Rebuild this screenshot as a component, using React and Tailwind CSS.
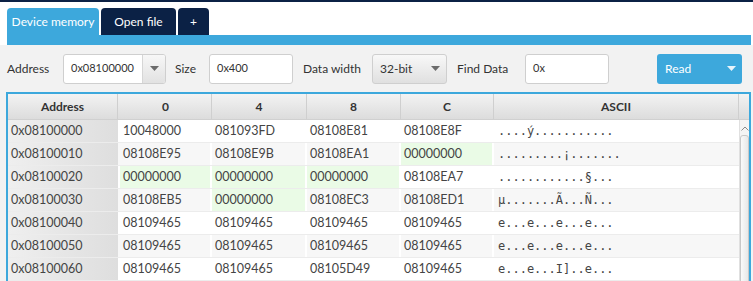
import React from "react";

const rows = [
  { addr: "0x08100000", cells: ["10048000", "081093FD", "08108E81", "08108E8F"], green: [], ascii: "....ý..........." },
  { addr: "0x08100010", cells: ["08108E95", "08108E9B", "08108EA1", "00000000"], green: [3], ascii: ".........¡......." },
  { addr: "0x08100020", cells: ["00000000", "00000000", "00000000", "08108EA7"], green: [0, 1, 2], ascii: "............§..." },
  { addr: "0x08100030", cells: ["08108EB5", "00000000", "08108EC3", "08108ED1"], green: [1], ascii: "µ.......Ã...Ñ..." },
  { addr: "0x08100040", cells: ["08109465", "08109465", "08109465", "08109465"], green: [], ascii: "e...e...e...e..." },
  { addr: "0x08100050", cells: ["08109465", "08109465", "08109465", "08109465"], green: [], ascii: "e...e...e...e..." },
  { addr: "0x08100060", cells: ["08109465", "08109465", "08105D49", "08109465"], green: [], ascii: "e...e...I]..e..." },
];

const Caret = ({ color = "#6b6b6b" }) => (
  <svg width="9" height="5" viewBox="0 0 9 5">
    <path d="M0 0 L9 0 L4.5 5 Z" fill={color} />
  </svg>
);

const headers = ["Address", "0", "4", "8", "C", "ASCII"];
const widths = ["w-[110px]", "w-[92px]", "w-[95px]", "w-[94px]", "w-[93px]", "w-[245px]"];

export default function App() {
  return (
    <div
      className="w-[753px] h-[281px] overflow-hidden bg-[#f2f2f2] text-[#333]"
      style={{ fontFamily: 'Lato, "Open Sans", sans-serif' }}
    >
      <div className="h-[2px] bg-[#0b2145]" />
      {/* tabs */}
      <div className="bg-white pt-[6px] pl-[7px] pr-[2px]">
        <div className="flex gap-[2px] h-[27px] items-stretch">
          <div className="w-[92px] bg-[#3da8dc] rounded-t-[4px] text-white text-[12px] flex items-center justify-center pt-[1px]">
            Device memory
          </div>
          <div className="w-[75px] bg-[#0b2145] rounded-t-[4px] text-white text-[12px] flex items-center justify-center pt-[1px]">
            Open file
          </div>
          <div className="w-[31px] bg-[#0b2145] rounded-t-[4px] text-white text-[12px] flex items-center justify-center pt-[1px]">
            +
          </div>
        </div>
        <div className="h-[10px] bg-[#3da8dc]" />
      </div>
      {/* toolbar */}
      <div className="flex items-center h-[47px] pl-[7px] text-[12px]">
        <span className="w-[56px]">Address</span>
        <div className="flex w-[103px] h-[30px] border border-[#cfcfcf] rounded-[3px] bg-white overflow-hidden">
          <div className="flex-1 flex items-center pl-[7px] text-[11px]">0x08100000</div>
          <div className="w-[23px] border-l border-[#d6d6d6] bg-gradient-to-b from-[#f7f7f7] to-[#e2e2e2] flex items-center justify-center">
            <Caret />
          </div>
        </div>
        <span className="ml-[9px] w-[34px]">Size</span>
        <div className="w-[84px] h-[30px] border border-[#cfcfcf] rounded-[3px] bg-white flex items-center pl-[7px] text-[11px]">
          0x400
        </div>
        <span className="ml-[10px] w-[69px]">Data width</span>
        <div className="w-[75px] h-[30px] border border-[#cfcfcf] rounded-[3px] bg-gradient-to-b from-[#f8f8f8] to-[#e0e0e0] flex items-center justify-between pl-[7px] pr-[6px] text-[12px]">
          <span>32-bit</span>
          <Caret />
        </div>
        <span className="ml-[10px] w-[68px]">Find Data</span>
        <div className="w-[84px] h-[30px] border border-[#cfcfcf] rounded-[3px] bg-white flex items-center pl-[7px] text-[11px]">
          0x
        </div>
        <div className="ml-[48px] w-[85px] h-[30px] rounded-[3px] bg-[#3da8dc] flex items-center justify-between pl-[8px] pr-[6px] text-white text-[12px]">
          <span>Read</span>
          <Caret color="#e8f4fb" />
        </div>
      </div>
      {/* table */}
      <div className="ml-[6px] w-[745px] border-2 border-[#3da8dc] border-b-0 bg-white">
        <div className="flex h-[26px] bg-gradient-to-b from-[#f3f3f3] to-[#dcdcdc] border-b border-[#d0d0d0]">
          {headers.map((h, i) => (
            <div
              key={h}
              className={`${widths[i]} ${i === 0 ? "mr-[2px]" : ""} flex items-center justify-center font-bold text-[12px] border-r border-[#cfcfcf]`}
            >
              {h}
            </div>
          ))}
          <div className="flex-1" />
        </div>
        <div className="flex">
          <div className="flex flex-col">
            {rows.map((r, ri) => (
              <div
                key={r.addr}
                className={`flex h-[23px] border-b border-[#ececec] ${ri % 2 === 1 ? "bg-[#f7f7f7]" : "bg-white"}`}
              >
                <div className="w-[110px] bg-gradient-to-r from-[#efefef] to-[#dedede] flex items-center pl-[3px] text-[12.5px] text-[#444] mr-[2px]">
                  {r.addr}
                </div>
                {r.cells.map((c, ci) => (
                  <div
                    key={ci}
                    className={`${widths[ci + 1]} flex items-center pl-[3px] text-[12.5px] text-[#444] border-r-2 border-white ${r.green.includes(ci) ? "bg-[#eafbe6]" : ""}`}
                  >
                    {c}
                  </div>
                ))}
                <div
                  className="w-[245px] flex items-center pl-[4px] text-[12px] text-[#444]"
                  style={{ fontFamily: '"DejaVu Sans Mono", "Liberation Mono", monospace' }}
                >
                  {r.ascii}
                </div>
              </div>
            ))}
          </div>
          <div className="flex-1 bg-[#f4f4f4] border-l border-[#e0e0e0] flex flex-col items-center">
            <svg width="8" height="5" viewBox="0 0 8 5" className="mt-[6px]">
              <path d="M0.5 4.5 L4 1 L7.5 4.5" stroke="#8a8a8a" strokeWidth="1" fill="none" />
            </svg>
            <div className="mt-[4px] w-[9px] h-[200px] border border-[#c8c8c8] rounded-[3px] bg-gradient-to-r from-[#fafafa] to-[#e8e8e8]" />
          </div>
        </div>
      </div>
    </div>
  );
}
